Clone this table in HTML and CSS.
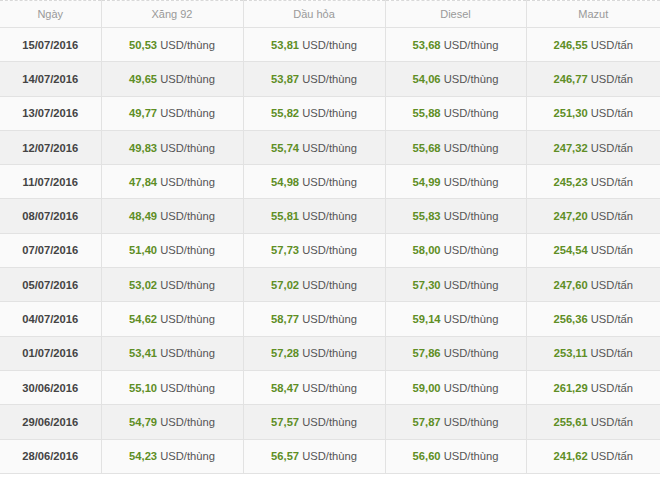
FILE: index.html
```html
<!DOCTYPE html>
<html lang="vi">
<head>
<meta charset="utf-8">
<title>Giá xăng dầu</title>
<link rel="stylesheet" href="styles.css">
</head>
<body>
<table class="prices">
  <colgroup>
    <col class="c-date"><col class="c-a"><col class="c-b"><col class="c-c"><col class="c-d">
  </colgroup>
  <thead>
    <tr><th>Ngày</th><th>Xăng 92</th><th>Dầu hỏa</th><th>Diesel</th><th>Mazut</th></tr>
  </thead>
  <tbody>
    <tr><td class="date">15/07/2016</td><td><b>50,53</b> USD/thùng</td><td><b>53,81</b> USD/thùng</td><td><b>53,68</b> USD/thùng</td><td><b>246,55</b> USD/tấn</td></tr>
    <tr><td class="date">14/07/2016</td><td><b>49,65</b> USD/thùng</td><td><b>53,87</b> USD/thùng</td><td><b>54,06</b> USD/thùng</td><td><b>246,77</b> USD/tấn</td></tr>
    <tr><td class="date">13/07/2016</td><td><b>49,77</b> USD/thùng</td><td><b>55,82</b> USD/thùng</td><td><b>55,88</b> USD/thùng</td><td><b>251,30</b> USD/tấn</td></tr>
    <tr><td class="date">12/07/2016</td><td><b>49,83</b> USD/thùng</td><td><b>55,74</b> USD/thùng</td><td><b>55,68</b> USD/thùng</td><td><b>247,32</b> USD/tấn</td></tr>
    <tr><td class="date">11/07/2016</td><td><b>47,84</b> USD/thùng</td><td><b>54,98</b> USD/thùng</td><td><b>54,99</b> USD/thùng</td><td><b>245,23</b> USD/tấn</td></tr>
    <tr><td class="date">08/07/2016</td><td><b>48,49</b> USD/thùng</td><td><b>55,81</b> USD/thùng</td><td><b>55,83</b> USD/thùng</td><td><b>247,20</b> USD/tấn</td></tr>
    <tr><td class="date">07/07/2016</td><td><b>51,40</b> USD/thùng</td><td><b>57,73</b> USD/thùng</td><td><b>58,00</b> USD/thùng</td><td><b>254,54</b> USD/tấn</td></tr>
    <tr><td class="date">05/07/2016</td><td><b>53,02</b> USD/thùng</td><td><b>57,02</b> USD/thùng</td><td><b>57,30</b> USD/thùng</td><td><b>247,60</b> USD/tấn</td></tr>
    <tr><td class="date">04/07/2016</td><td><b>54,62</b> USD/thùng</td><td><b>58,77</b> USD/thùng</td><td><b>59,14</b> USD/thùng</td><td><b>256,36</b> USD/tấn</td></tr>
    <tr><td class="date">01/07/2016</td><td><b>53,41</b> USD/thùng</td><td><b>57,28</b> USD/thùng</td><td><b>57,86</b> USD/thùng</td><td><b>253,11</b> USD/tấn</td></tr>
    <tr><td class="date">30/06/2016</td><td><b>55,10</b> USD/thùng</td><td><b>58,47</b> USD/thùng</td><td><b>59,00</b> USD/thùng</td><td><b>261,29</b> USD/tấn</td></tr>
    <tr><td class="date">29/06/2016</td><td><b>54,79</b> USD/thùng</td><td><b>57,57</b> USD/thùng</td><td><b>57,87</b> USD/thùng</td><td><b>255,61</b> USD/tấn</td></tr>
    <tr><td class="date">28/06/2016</td><td><b>54,23</b> USD/thùng</td><td><b>56,57</b> USD/thùng</td><td><b>56,60</b> USD/thùng</td><td><b>241,62</b> USD/tấn</td></tr>
  </tbody>
</table>
</body>
</html>
```

FILE: styles.css
```css
html, body {
  margin: 0;
  padding: 0;
  background: #ffffff;
}
body {
  font-family: "Liberation Sans", Arial, sans-serif;
  font-size: 11.2px;
  color: #555555;
}
.prices {
  width: 660px;
  table-layout: fixed;
  border-collapse: collapse;
  border-top: 1px dashed #d8d8d8;
}
.c-date { width: 101px; }
.c-a { width: 142px; }
.c-b { width: 142px; }
.c-c { width: 141px; }
.c-d { width: 134px; }
.prices th,
.prices td {
  text-align: center;
  padding: 0;
  border-left: 1px solid #e2e2e2;
  border-bottom: 1px solid #e2e2e2;
}
.prices th:first-child,
.prices td:first-child {
  border-left: none;
}
.prices th {
  height: 26px;
  font-weight: normal;
  color: #999999;
  font-size: 11px;
  background: #fafafa;
}
.prices td {
  height: 33.3px;
  background: #fafafa;
}
.prices tbody tr:nth-child(even) td {
  background: #f1f1f1;
}
.prices td b {
  color: #5e8e25;
  font-weight: bold;
}
.prices td.date {
  font-weight: bold;
  color: #444444;
}
```
